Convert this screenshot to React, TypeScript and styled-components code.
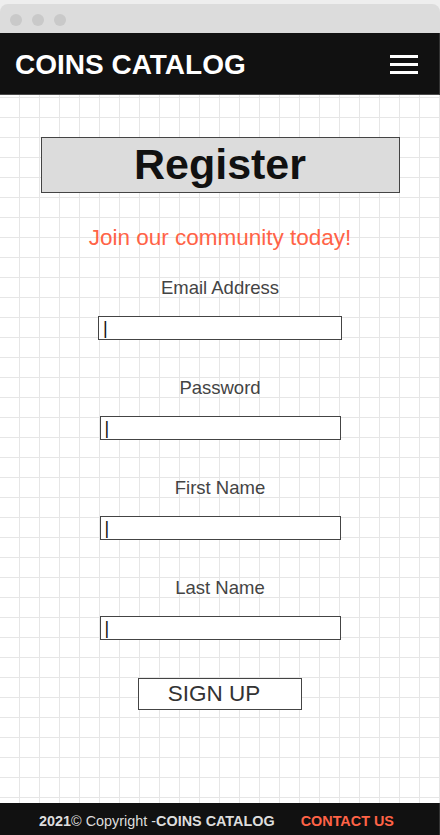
import styled, { createGlobalStyle } from "styled-components";

const GlobalStyle = createGlobalStyle`
html, body {
  margin: 0;
  padding: 0;
  background: #eeeeee;
  font-family: "Liberation Sans", Arial, sans-serif;
}
* { box-sizing: border-box; }
`

const Page = styled.div`
display: flex;
flex-direction: column;
min-height: 100vh;
padding-top: 4px;
`

const Chrome = styled.div`
height: 29px;
background: #dcdcdc;
border-radius: 8px 8px 0 0;
display: flex;
align-items: center;
gap: 10px;
padding-left: 10px;
padding-top: 2px;
`

const Dot = styled.span`
width: 12px;
height: 12px;
border-radius: 50%;
background: #c9c9c9;
`

const Header = styled.header`
height: 62px;
background: #111111;
border-bottom: 1px solid #4a4a4a;
border-right: 1px solid #333;
display: flex;
align-items: center;
justify-content: space-between;
padding: 2px 21px 0 15px;
`

const Brand = styled.h1`
margin: 0;
color: #ffffff;
font-size: 28px;
font-weight: 700;
`

const Burger = styled.button`
all: unset;
width: 28px;
display: flex;
flex-direction: column;
gap: 5px;
cursor: pointer;
span {
  display: block;
  height: 3px;
  background: #ffffff;
}
`

const Main = styled.main`
flex: 1;
background-color: #ffffff;
background-image:
  linear-gradient(to right, transparent 19px, #e6e6e6 19px, #e6e6e6 20px, transparent 20px),
  linear-gradient(to bottom, transparent 2px, #e6e6e6 2px, #e6e6e6 3px, transparent 3px);
background-size: 20px 20px;
display: flex;
flex-direction: column;
align-items: center;
padding-top: 42px;
`

const TitleBox = styled.div`
width: 359px;
height: 56px;
background: #dcdcdc;
border: 1px solid #444;
display: flex;
align-items: center;
justify-content: center;
`

const Title = styled.h2`
margin: 0;
color: #111;
font-size: 43px;
font-weight: 700;
line-height: 1;
padding-bottom: 1px;
`

const Tagline = styled.p`
margin: 32px 0 27px;
color: #ff6347;
font-size: 22.5px;
line-height: 26px;
`

const Field = styled.div`
display: flex;
flex-direction: column;
align-items: center;
margin-bottom: 38px;
`

const Label = styled.label`
color: #444;
font-size: 18.5px;
line-height: 20px;
margin-bottom: 18px;
`

const Input = styled.input<{ $w: number }>`
width: ${p => p.$w}px;
height: 24px;
border: 1px solid #444;
background: #fff;
padding: 0 0 0 4px;
font-family: "Liberation Sans", Arial, sans-serif;
font-size: 18px;
outline: none;
&::placeholder {
  color: #111;
  opacity: 1;
}
`

const SignUp = styled.button`
all: unset;
width: 164px;
height: 32px;
border: 1px solid #444;
background: #fff;
box-sizing: border-box;
display: flex;
align-items: center;
justify-content: center;
padding-right: 12px;
color: #333;
font-size: 22.5px;
cursor: pointer;
`

const Footer = styled.footer`
height: 32px;
background: #111;
border-right: 1px solid #333;
display: flex;
align-items: center;
justify-content: center;
gap: 26px;
padding: 3px 6px 0 0;
font-size: 14.4px;
color: #dddddd;
b { font-weight: 700; }
`

const Contact = styled.a`
color: #ff6347;
font-weight: 700;
text-decoration: none;
`

const fields = [
    { label: "Email Address", w: 244 },
    { label: "Password", w: 241 },
    { label: "First Name", w: 241 },
    { label: "Last Name", w: 241 },
]

export default function App() {
    return (
        <Page>
            <GlobalStyle />
            <Chrome>
                <Dot /><Dot /><Dot />
            </Chrome>
            <Header>
                <Brand>COINS CATALOG</Brand>
                <Burger aria-label="menu"><span /><span /><span /></Burger>
            </Header>
            <Main>
                <TitleBox><Title>Register</Title></TitleBox>
                <Tagline>Join our community today!</Tagline>
                {fields.map(f => (
                    <Field key={f.label}>
                        <Label>{f.label}</Label>
                        <Input $w={f.w} type="text" placeholder="|" />
                    </Field>
                ))}
                <SignUp>SIGN UP</SignUp>
            </Main>
            <Footer>
                <span><b>2021</b>© Copyright -<b>COINS CATALOG</b></span>
                <Contact href="#">CONTACT US</Contact>
            </Footer>
        </Page>
    )
}
